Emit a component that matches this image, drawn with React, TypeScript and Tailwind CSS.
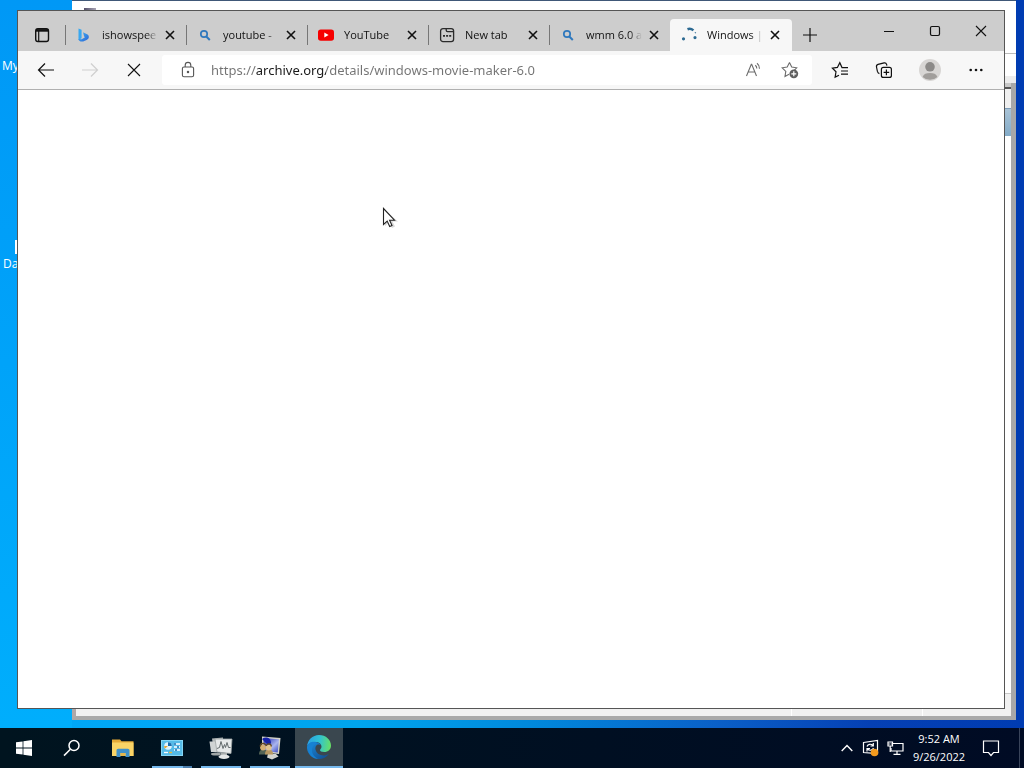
import React from 'react';
import type { ReactNode } from 'react';

function BingIcon() {
  return (
    <svg width="16" height="16" viewBox="0 0 16 16" fill="none">
      <defs>
        <linearGradient id="bing" x1="0" y1="0" x2="1" y2="1">
          <stop offset="0" stopColor="#43b4f2" />
          <stop offset="1" stopColor="#2a63d6" />
        </linearGradient>
      </defs>
      <path d="M2.5 1.6 5.6 2.7v8.6L2.5 13z" fill="#39a8f0" />
      <path d="M7 5.3 11 7.2C12.400 7.900 13 9 12.800 10.400 12.400 12.200 10.600 13 8.800 13.700 7 14.600 5 15 3.700 14 2.800 13.300 2.500 12.800 2.500 12l3.100.3L8.800 10.400 8 9z" fill="url(#bing)" />
    </svg>
  );
}

function SearchBlue() {
  return (
    <svg width="16" height="16" viewBox="0 0 16 16" fill="none" stroke="#2f78bd" strokeWidth="1.7">
      <circle cx="7" cy="7" r="3.200" />
      <path d="M9.300 9.500 12.800 13" strokeWidth="2" />
    </svg>
  );
}

function YouTubeIcon() {
  return (
    <svg width="16" height="16" viewBox="0 0 16 16">
      <rect x="0" y="2.4" width="16" height="11.4" rx="2.8" fill="#f60000" />
      <path d="M6.3 5.6v5L10.6 8z" fill="#fff" />
    </svg>
  );
}

function NewTabIcon() {
  return (
    <svg width="16" height="16" viewBox="0 0 16 16" fill="none" stroke="#2b2b2b" strokeWidth="1.3">
      <rect x="1.6" y="1.6" width="13" height="13" rx="2.4" />
      <path d="M7.2 1.8v1.4c0 .9.5 1.400 1.400 1.400h6" />
      <path d="M4 8.800h2M7.100 8.800h2M10.200 8.800h2" strokeWidth="1.800" />
    </svg>
  );
}

function Spinner() {
  return (
    <svg width="16" height="16" viewBox="0 0 16 16" fill="none" stroke="#2d6a92" strokeWidth="2.6">
      <path d="M6.500 2.200C8.300 1.500 10.600 1.800 12.400 3.400" />
      <circle cx="2.500" cy="11.800" r=".8" strokeWidth="1.6" />
      <circle cx="14" cy="10.600" r=".8" strokeWidth="1.6" />
      <circle cx="14.300" cy="5.800" r=".3" strokeWidth="1" />
    </svg>
  );
}

function CloseGlyph() {
  return (
    <svg width="10" height="10" viewBox="0 0 10 10" stroke="#111" strokeWidth="1.6">
      <path d="M1 1l8 8M9 1 1 9" />
    </svg>
  );
}

interface TabInfo {
  title: string;
  icon: ReactNode;
  active?: boolean;
}

const tabs: TabInfo[] = [
  { title: 'ishowspee', icon: <BingIcon /> },
  { title: 'youtube -', icon: <SearchBlue /> },
  { title: 'YouTube', icon: <YouTubeIcon /> },
  { title: 'New tab', icon: <NewTabIcon /> },
  { title: 'wmm 6.0 a', icon: <SearchBlue /> },
  { title: 'Windows |', icon: <Spinner />, active: true },
];

function Tab({ title, icon, active }: TabInfo) {
  return (
    <div
      className={
        active
          ? 'flex h-8 w-[122px] shrink-0 items-center rounded-t-[4px] bg-[#f7f7f7] pl-[11px]'
          : 'flex h-8 w-[121px] shrink-0 items-center pl-[11px] bg-[linear-gradient(#777,#777)] bg-[length:1px_20px] bg-[position:0_6px] bg-no-repeat'
      }
    >
      {icon}
      <span className="ml-2.5 w-[56px] shrink-0 overflow-hidden whitespace-nowrap text-[11px] leading-4 text-[#111] [mask-image:linear-gradient(90deg,#000_78%,transparent)]">
        {title}
      </span>
      <button type="button" aria-label="Close tab" className="ml-0.5 flex h-5 w-5 items-center justify-center">
        <CloseGlyph />
      </button>
    </div>
  );
}

function IconButton({ label, className, children }: { label: string; className?: string; children: ReactNode }) {
  return (
    <button type="button" aria-label={label} className={'flex shrink-0 items-center justify-center ' + (className ?? 'h-8 w-11')}>
      {children}
    </button>
  );
}

function TabStrip() {
  return (
    <div className="flex h-10 items-end bg-[#cdcdcd]">
      <IconButton label="Tab actions" className="h-8 w-[47px]">
        <svg width="16" height="16" viewBox="0 0 16 16" fill="none" stroke="#111" strokeWidth="1.4">
          <rect x="1.7" y="1.7" width="12.8" height="12.8" rx="2.2" />
          <path d="M2 3.4h12.4" strokeWidth="2.6" />
          <path d="M4.7 4v10.4" strokeWidth="1.2" />
        </svg>
      </IconButton>
      {tabs.map((t) => (
        <Tab key={t.title} {...t} />
      ))}
      <IconButton label="Open new tab" className="h-8 w-9">
        <svg width="16" height="16" viewBox="0 0 16 16" stroke="#111" strokeWidth="1.2">
          <path d="M8 1v14M1 8h14" />
        </svg>
      </IconButton>
      <div className="ml-auto flex self-start">
        <IconButton label="Minimize" className="h-10 w-[46px]">
          <svg width="12" height="12" viewBox="0 0 12 12" stroke="#111" strokeWidth="1">
            <path d="M1 6.5h10" />
          </svg>
        </IconButton>
        <IconButton label="Maximize" className="h-10 w-[46px]">
          <svg width="12" height="12" viewBox="0 0 12 12" fill="none" stroke="#111" strokeWidth="1.2">
            <rect x="1.5" y="1.5" width="9" height="9" rx="1.4" />
          </svg>
        </IconButton>
        <IconButton label="Close" className="h-10 w-[46px]">
          <svg width="12" height="12" viewBox="0 0 12 12" stroke="#111" strokeWidth="1.1">
            <path d="M1 1l10 10M11 1 1 11" />
          </svg>
        </IconButton>
      </div>
    </div>
  );
}

function Toolbar() {
  return (
    <div className="flex h-[39px] items-center border-b border-[#b0b0b0] bg-[#f7f7f7] pl-1.5 pr-1.5">
      <IconButton label="Back">
        <svg width="18" height="16" viewBox="0 0 18 16" fill="none" stroke="#111" strokeWidth="1.2">
          <path d="M17 8H1.5M8 1.5 1.5 8 8 14.5" />
        </svg>
      </IconButton>
      <IconButton label="Forward">
        <svg width="18" height="16" viewBox="0 0 18 16" fill="none" stroke="#cfcfcf" strokeWidth="1.2">
          <path d="M1 8h15.5M10 1.5 16.5 8 10 14.5" />
        </svg>
      </IconButton>
      <IconButton label="Stop loading">
        <svg width="14" height="14" viewBox="0 0 14 14" stroke="#111" strokeWidth="1.1">
          <path d="M1 1l12 12M13 1 1 13" />
        </svg>
      </IconButton>
      <form className="ml-1.5 flex h-[30px] min-w-0 flex-1 items-center rounded-[3px] bg-white pl-2.5">
        <IconButton label="Site information" className="h-7 w-8">
          <svg width="14" height="18" viewBox="0 0 14 18" fill="none" stroke="#555" strokeWidth="1.1">
            <rect x="1.4" y="6" width="11.2" height="9.8" rx="1.6" />
            <path d="M4.2 6V4.2a2.8 2.8 0 0 1 5.6 0V6" />
            <circle cx="7" cy="11" r=".7" fill="#333" />
          </svg>
        </IconButton>
        <input
          type="text"
          aria-label="Address and search bar"
          defaultValue="https://archive.org/details/windows-movie-maker-6.0"
          className="ml-[7px] h-7 min-w-0 flex-1 bg-[linear-gradient(90deg,#737373_45px,#1a1a1a_45px,#1a1a1a_115px,#737373_115px)] bg-clip-text font-['Noto_Sans',sans-serif] text-[13px] text-transparent outline-none"
        />
        <IconButton label="Read aloud" className="h-7 w-9">
          <svg width="18" height="16" viewBox="0 0 18 16" fill="none" stroke="#6c6c6c" strokeWidth="1.1">
            <path d="M1.500 14 6.300 2.200h.4L11.500 14M3.200 10h6.600" />
            <path d="M10.300 3.300c1 .8 1.500 2 1.500 3.300M12 1.300c1.700 1.300 2.500 3.300 2.500 5.500" />
          </svg>
        </IconButton>
        <IconButton label="Add to favorites" className="mr-1 h-7 w-9">
          <svg width="18" height="18" viewBox="0 0 18 18" fill="none">
            <path d="M8.5 1.6 10.7 6l5 .8-3.3 3.4M8.5 1.6 6.2 6l-5 .8L4.8 10.4l-.8 5 4-2.1" stroke="#6c6c6c" strokeWidth="1.1" />
            <circle cx="12.8" cy="12.8" r="4.4" fill="#5f5f5f" />
            <path d="M12.8 10.3v5M10.3 12.8h5" stroke="#fff" strokeWidth="1.2" />
          </svg>
        </IconButton>
      </form>
      <IconButton label="Favorites" className="ml-1.5 h-8 w-11">
        <svg width="18" height="18" viewBox="0 0 18 18" fill="none" stroke="#111" strokeWidth="1.2">
          <path d="M17 6.600h-6L8.800 1.700 6.400 6.400l-5 .8L5 10.800l-.9 5.300L8 14.200" />
          <path d="M10 10h7M10 13.200h7" />
        </svg>
      </IconButton>
      <IconButton label="Collections">
        <svg width="18" height="18" viewBox="0 0 18 18" fill="none" stroke="#111" strokeWidth="1.2">
          <rect x="6.400" y="6.400" width="10" height="10" rx="2" />
          <path d="M11.400 8.600v5.600M8.600 11.400h5.600" />
          <path d="M4.400 12.600c-1.300-.4-1.700-1.200-2-2.200L1.500 6c-.3-1.500.4-2.400 1.600-2.700l6-1.400c1.300-.3 2.100.3 2.500 1.500l.3 1.200" />
        </svg>
      </IconButton>
      <IconButton label="Profile" className="h-8 w-12">
        <svg width="22" height="22" viewBox="0 0 22 22">
          <circle cx="11" cy="11" r="11" fill="#d8d6d4" />
          <circle cx="11" cy="7.800" r="4.800" fill="#8c8a88" />
          <path d="M3.600 18c1.200-3.100 3.600-4 7.400-4s6.200.9 7.400 4a11 11 0 0 1-14.800 0z" fill="#a19e9b" />
        </svg>
      </IconButton>
      <IconButton label="Settings and more">
        <svg width="14" height="4" viewBox="0 0 14 4" fill="#111">
          <circle cx="1.700" cy="2" r="1.300" />
          <circle cx="7" cy="2" r="1.300" />
          <circle cx="12.300" cy="2" r="1.300" />
        </svg>
      </IconButton>
    </div>
  );
}

function BackWindow() {
  return (
    <div className="absolute bottom-2 left-[72px] right-2 top-0 flex flex-col border-t border-[#405878] bg-white">
      <div className="flex h-[52px] items-start pl-3 pt-[7px]">
        <div className="h-2 w-3 bg-linear-to-r from-[#55506a] to-[#a9a4b4]" />
      </div>
      <div className="h-[30px] border-t border-[#bbb] bg-[linear-gradient(#fff_22px,#ececec_22px)]" />
      <div className="flex min-h-0 flex-1 flex-col border-b-4 border-l-4 border-r-[5px] border-[#a8a8a8] border-l-[#b0a8a8]">
        <div className="h-[26px] border-b border-b-[#7d9cb8] bg-[linear-gradient(#c8c8c8_4px,#555_4px,#555_6px,#f0f0f0_6px)]" />
        <div className="h-[27px] bg-linear-to-b from-[#a9c3d6] to-[#83abc8]" />
        <div className="flex-1 border-b border-[#c8c8c8]" />
        <div className="flex h-[22px] justify-end bg-[#f0f0f0] pr-[88px]">
          <div className="w-px bg-white" />
          <div className="ml-[130px] w-px bg-white" />
        </div>
      </div>
    </div>
  );
}

function Cursor() {
  return (
    <svg className="absolute left-[364px] top-[117px]" width="18" height="24" viewBox="0 0 18 24">
      <path d="M3 3v16l4-3.500 3 5.500 3-1.500-2.500-5H16z" fill="#000" opacity=".15" />
      <path d="M1.500 1.500v16l3.700-3.400 2.500 5.400 2.300-1-2.400-5.300h4.900z" fill="#fff" stroke="#222" strokeWidth="1.100" />
    </svg>
  );
}

function ExplorerIcon() {
  return (
    <svg width="22" height="20" viewBox="0 0 22 20">
      <path d="M0 1.500h8l1.500 1.800H21.500V18H0z" fill="#e5aa37" />
      <path d="M0 4.500h21.500V18H0z" fill="#fad466" />
      <path d="M4.500 19v-6.500c0-1 .7-1.700 1.700-1.700h9.600c1 0 1.700.7 1.700 1.700V19h-4v-4h-5v4z" fill="#4191c9" />
      <path d="M8.500 15h5v3h-5z" fill="#e4b64c" />
    </svg>
  );
}

function ControlPanelIcon() {
  return (
    <svg width="22" height="18" viewBox="0 0 22 18">
      <rect x=".500" y="1.500" width="21" height="15" fill="#55bbe8" stroke="#85d6f4" />
      <circle cx="7" cy="7" r="3.800" fill="#dff3fb" />
      <path d="M7 7V3.200A3.800 3.800 0 0 1 10.800 7z" fill="#1a6cae" />
      <path d="M7 7 4 9.600A3.800 3.800 0 0 1 3.200 7z" fill="#e6a42f" />
      <path d="M13 5h6M13 8h6M13 11h6" stroke="#fff" strokeWidth="1.300" />
      <path d="M14 4v2M17 7v2M15 10v2" stroke="#1a6cae" strokeWidth="1.500" />
      <path d="M3 13.500h4" stroke="#fff" strokeWidth="1.300" />
      <path d="M8 13.500h3" stroke="#e9b83f" strokeWidth="1.300" />
    </svg>
  );
}

function MonitorIcon() {
  return (
    <svg width="24" height="24" viewBox="0 0 24 24">
      <path d="M3 2.500 14 1.500v13L5 16z" fill="#b2b7b7" />
      <path d="M.500 5.500h10v10.500H2z" fill="#d0d4d4" />
      <path d="M6 3h17l-1 14.500L8 16z" fill="#e6e9e9" stroke="#9da3a3" strokeWidth=".800" />
      <path d="m8 12.500 2.500-1 1.500-6 2 7 1.500-4 1 3 1.500-5 1.500 5h2" fill="none" stroke="#636b6d" />
      <path d="M12 17h6v3h-6z" fill="#a5aaaa" />
      <ellipse cx="15" cy="20.800" rx="5.500" ry="2.200" fill="#e3e6e6" />
      <ellipse cx="7" cy="18" rx="5" ry="1.500" fill="#a0a6a6" />
    </svg>
  );
}

function UsersIcon() {
  return (
    <svg width="24" height="24" viewBox="0 0 24 24">
      <defs>
        <linearGradient id="screen" x1="0" y1="0" x2="1" y2="1">
          <stop offset="0" stopColor="#1724b0" />
          <stop offset=".600" stopColor="#aab5ee" />
          <stop offset="1" stopColor="#3345c0" />
        </linearGradient>
      </defs>
      <path d="m4 .500 18.500 1.500L21 18 4 16.500z" fill="#d5d4c9" />
      <path d="M5.500 2 21 3.200 19.700 16.400 5.500 15z" fill="url(#screen)" />
      <path d="M4 3c4-3 9-1 9 4l-2 3-4-4z" fill="#1521a8" />
      <path d="M10 18h8l2.500 2.500-6.500 3-5-2z" fill="#d3d5cf" />
      <path d="M1 18.500c0-4 2-5 4.500-5s4 1 4.500 5z" fill="#536456" />
      <path d="M7 18.500c0-4 2-5 4-5s4 1 4 5z" fill="#b89963" />
      <circle cx="5" cy="11.500" r="2.900" fill="#d5af74" />
      <circle cx="10.800" cy="11.500" r="2.900" fill="#dfc390" />
      <path d="M2.300 10.500c0-4 5-4 5.500-1M8.300 10c.5-3 5-3 5 .5" fill="none" stroke="#614924" strokeWidth="1.300" />
    </svg>
  );
}

function EdgeIcon() {
  return (
    <svg width="24" height="24" viewBox="0 0 24 24">
      <defs>
        <linearGradient id="edgeTop" x1="0" y1=".400" x2="1" y2=".500">
          <stop offset="0" stopColor="#2a9fe3" />
          <stop offset=".500" stopColor="#2fc2d4" />
          <stop offset="1" stopColor="#67df66" />
        </linearGradient>
        <linearGradient id="edgeLow" x1="0" y1="0" x2="1" y2="1">
          <stop offset="0" stopColor="#1b8ddd" />
          <stop offset="1" stopColor="#114a8c" />
        </linearGradient>
      </defs>
      <path d="M0 11.500C.500 5 5.500 0 12 0c7 0 12 5 12 10.500 0 4-3 6.500-6.700 6.500-3 0-4.300-1-4.300-2 0-.8 1.500-1.300 1.500-3.300C14.500 9 12 7 8.500 7 4 7 1 9 0 11.500z" fill="url(#edgeTop)" />
      <path d="M0 12c.5-3.500 4-5.500 8-5.200 3 .2 5 1.700 6 3.400-1-.8-2.300-1-3.300-.6-2 .8-2.600 3-2.200 5 .7 3.800 4.300 5.900 8 5.900 2 0 3.700-.6 5.300-1.500C19.800 22 16 24 12 24 5 24-.3 18.500 0 12z" fill="url(#edgeLow)" />
      <path d="M1.500 9.500C.3 14 1 18 4 21c2 2 4.500 3 7.500 3C7 22 4.700 18.500 5 14.500c.2-2.800 2-5 5-6C6.500 6.300 3 7 1.500 9.500z" fill="#1681d2" />
    </svg>
  );
}

const apps = [
  { label: 'File Explorer', icon: <ExplorerIcon />, state: '' },
  { label: 'Control Panel', icon: <ControlPanelIcon />, state: 'bg-[linear-gradient(90deg,#76b9ed_31px,#4c7fae_31px)]' },
  { label: 'Performance Monitor', icon: <MonitorIcon />, state: 'bg-[#76b9ed]' },
  { label: 'User Accounts', icon: <UsersIcon />, state: 'bg-[#76b9ed]' },
];

function Taskbar() {
  return (
    <nav aria-label="Taskbar" className="flex h-10 shrink-0 bg-linear-to-r from-[#00141f] to-[#000b24] text-white">
      <IconButton label="Start" className="h-10 w-12">
        <svg width="16" height="16" viewBox="0 0 16 16" fill="#fff">
          <path d="M0 2.300 6.600 1.400v6.200H0zM7.400 1.300 16 0v7.600H7.400zM0 8.400h6.600v6.200L0 13.700zM7.400 8.400H16V16l-8.600-1.300z" />
        </svg>
      </IconButton>
      <IconButton label="Search" className="mr-0.5 h-10 w-12">
        <svg width="18" height="18" viewBox="0 0 18 18" fill="none" stroke="#fff" strokeWidth="1.500">
          <circle cx="11" cy="6.500" r="5" />
          <path d="M7.400 10.200 1 16.600" />
        </svg>
      </IconButton>
      {apps.map((a) => (
        <button key={a.label} type="button" aria-label={a.label} className="flex h-10 w-[49px] shrink-0 flex-col items-center">
          <span className="flex flex-1 items-center pt-0.5">{a.icon}</span>
          <span className={'h-0.5 w-10 ' + a.state} />
        </button>
      ))}
      <button type="button" aria-label="Microsoft Edge" className="ml-px flex h-10 w-12 shrink-0 flex-col items-center bg-[#3a474f]">
        <span className="flex flex-1 items-center">
          <EdgeIcon />
        </span>
        <span className="h-0.5 w-full bg-[#76b9ed]" />
      </button>
      <div className="ml-auto flex items-center">
        <IconButton label="Show hidden icons" className="h-10 w-6">
          <svg width="12" height="8" viewBox="0 0 12 8" fill="none" stroke="#fff" strokeWidth="1.400">
            <path d="M.700 7 6 1.500 11.300 7" />
          </svg>
        </IconButton>
        <IconButton label="Updates" className="h-10 w-6">
          <svg width="18" height="18" viewBox="0 0 18 18" fill="none" stroke="#fff" strokeWidth="1.200">
            <path d="M1.500 3.500 15.500 1.500v13l-14-1z" />
            <path d="M5 7.500C6 5 9 4.500 11 6.500M11.300 4v3H8.500M11.500 9c-1 2.500-4 3-6 1M5 12.500v-3h3" />
            <circle cx="12.500" cy="13.500" r="3.800" fill="#f39a1e" stroke="none" />
          </svg>
        </IconButton>
        <IconButton label="Network" className="h-10 w-6">
          <svg width="17" height="16" viewBox="0 0 17 16" fill="none" stroke="#fff" strokeWidth="1.200">
            <path d="M6 3.500h10v7.500H4V8M10 11v3M6.500 14.400h7" />
            <path d="M1 2h4.500v4H1zM3.200 6v6M2.300 3.500v1M4.200 3.500v1" />
          </svg>
        </IconButton>
        <button type="button" className="w-16 text-center text-[11px] leading-[18px] whitespace-nowrap">
          <span className="block">9:52 AM</span>
          <span className="block">9/26/2022</span>
        </button>
        <IconButton label="Notifications" className="h-10 w-10">
          <svg width="18" height="18" viewBox="0 0 18 18" fill="none" stroke="#fff" strokeWidth="1.200">
            <path d="M1.500 2h15v11.500h-5L9 16.500l-2.500-3h-5z" />
          </svg>
        </IconButton>
        <div className="ml-2 h-10 w-[5px] border-l border-[#39445a]" />
      </div>
    </nav>
  );
}

export default function App() {
  return (
    <div className="flex h-screen flex-col overflow-hidden font-['Open_Sans','Noto_Sans',sans-serif]">
      <main className="relative min-h-0 flex-1 bg-[linear-gradient(90deg,#00a8fb_0%,#00a5ee_35%,#0088dc_52%,#0a60c8_70%,#0540b4_85%,#003cb2_100%)]">
        <div className="absolute inset-y-0 left-0 w-[72px] bg-linear-to-b from-[#0098f6] to-[#00aefc]" />
        <span className="absolute left-0.5 top-[58px] text-xs text-white whitespace-nowrap">My</span>
        <div className="absolute left-[15px] top-[240px] h-[14px] w-2 bg-white" />
        <span className="absolute left-[3px] top-[256px] text-xs text-white whitespace-nowrap">Da</span>
        <BackWindow />
        <section
          aria-label="Browser"
          className="absolute bottom-[19px] left-[17px] right-[19px] top-2.5 flex flex-col border border-[#555] bg-white"
        >
          <TabStrip />
          <Toolbar />
          <div className="relative min-h-0 flex-1 bg-white">
            <Cursor />
          </div>
        </section>
      </main>
      <Taskbar />
    </div>
  );
}
